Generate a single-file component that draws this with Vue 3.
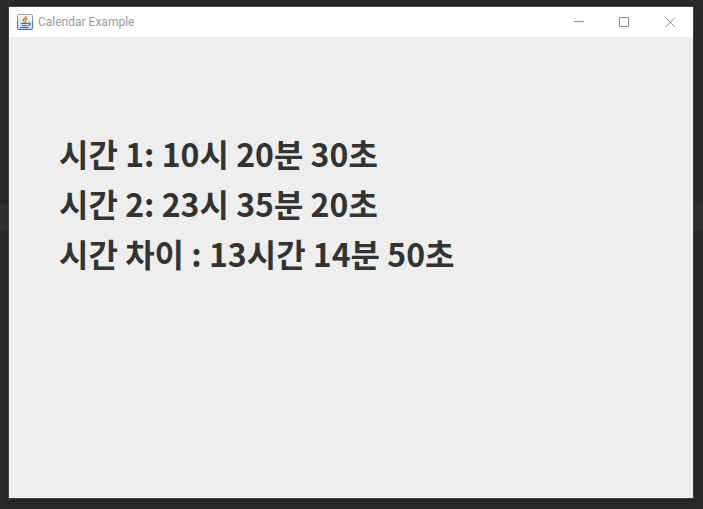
<template>
  <div class="desktop">
    <div class="strip"></div>
    <div class="window">
      <header class="titlebar">
        <svg class="java" viewBox="0 0 16 16" width="16" height="16" aria-hidden="true">
          <defs>
            <linearGradient id="tile" x1="0" y1="0" x2="0" y2="1">
              <stop offset="0" stop-color="#fdfdfe" />
              <stop offset="1" stop-color="#c6d3e0" />
            </linearGradient>
            <linearGradient id="edge" x1="0" y1="0" x2="0" y2="1">
              <stop offset="0" stop-color="#8fa2b3" />
              <stop offset="1" stop-color="#3d678c" />
            </linearGradient>
          </defs>
          <rect x="0.5" y="0.5" width="15" height="15" rx="1" fill="url(#tile)" stroke="url(#edge)" />
          <path d="M9 2C9.4 4 5.8 4.8 6.3 6.6C6.5 7.4 7.2 7.8 7.4 8.6M10.6 4.3C8.8 5 8 5.8 8.6 6.8C9 7.5 8.6 8 8.2 8.4" fill="none" stroke="#e87424" stroke-width="1.4" />
          <path d="M4 9.5H11M5 11.5H10.4M3 13.5H11.6M11 9.2C14 8.6 13.8 11 11.2 11.5" fill="none" stroke="#3f6c93" stroke-width="1.2" />
        </svg>
        <h1>Calendar Example</h1>
        <div class="controls">
          <button type="button" aria-label="Minimize">
            <svg viewBox="0 0 11 11" width="11" height="11"><path d="M1 4.5H11" /></svg>
          </button>
          <button type="button" aria-label="Maximize">
            <svg viewBox="0 0 11 11" width="11" height="11"><path d="M0.5 0.5H9.5V9.5H0.5Z" /></svg>
          </button>
          <button type="button" aria-label="Close">
            <svg viewBox="0 0 11 11" width="11" height="11"><path d="M0.5 0.5L10 10M10 0.5L0.5 10" /></svg>
          </button>
        </div>
      </header>
      <main class="content">
        <p v-for="line in lines" :key="line">{{ line }}</p>
      </main>
    </div>
  </div>
</template>

<script setup>
const lines = [
  "시간 1: 10시 20분 30초",
  "시간 2: 23시 35분 20초",
  "시간 차이 : 13시간 14분 50초",
];
</script>

<style>
body {
  margin: 0;
  background: #2b2b2b;
}
</style>

<style scoped>
.desktop {
  position: relative;
  box-sizing: border-box;
  display: flex;
  min-height: 100vh;
  padding: 6px 9px 10px 8px;
  background: #2b2b2b;
}
/* editor line showing behind the window */
.strip {
  position: absolute;
  top: 204px;
  left: 0;
  right: 0;
  height: 26px;
  background: #323232;
}
.window {
  position: relative;
  flex: 1;
  display: flex;
  flex-direction: column;
  border: 1px solid #444;
  background: #eee;
  box-shadow: 0 2px 8px rgba(0, 0, 0, 0.3);
}
.titlebar {
  display: flex;
  align-items: center;
  height: 30px;
  padding-left: 8px;
  background: #fff;
}
.java {
  margin-right: 5px;
}
h1 {
  margin: 0;
  font: 400 12px/16px Roboto, "Noto Sans CJK KR", sans-serif;
  color: #999;
}
.controls {
  display: flex;
  margin-left: auto;
}
button {
  display: flex;
  align-items: center;
  justify-content: center;
  width: 46px;
  height: 28px;
  padding: 0;
  border: 0;
  background: none;
}
button path {
  fill: none;
  stroke: #8f8f8f;
}
.content {
  padding: 91px 50px;
}
p {
  margin: 0;
  font: 700 32px/50px "Noto Sans CJK KR", sans-serif;
  color: #333;
}
</style>
